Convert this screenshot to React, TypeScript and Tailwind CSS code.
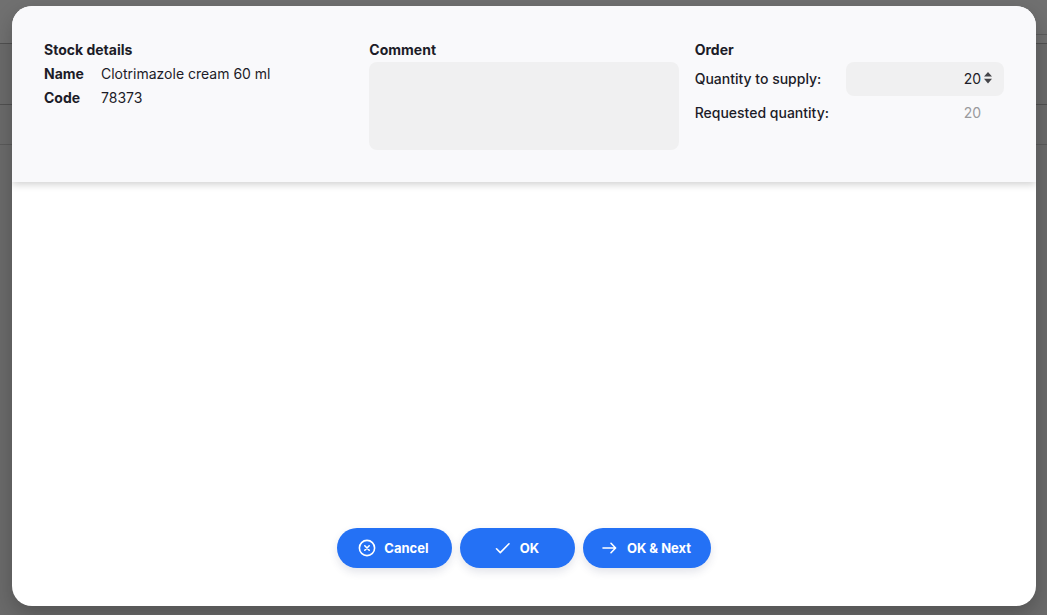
import { useState } from 'react';

const actionClass =
  'flex h-10 min-w-[115px] items-center justify-center gap-2 rounded-full bg-[#2471f5] pl-4 pr-5 text-[13px] font-bold leading-5 text-white shadow-[0_4px_8px_rgba(40,50,90,0.13)]';

function CancelIcon() {
  return (
    <svg viewBox="0 0 20 20" className="h-5 w-5" fill="none" stroke="currentColor" strokeWidth="1.6" strokeLinecap="round" aria-hidden="true">
      <circle cx="11" cy="10" r="7.6" />
      <path d="M8.8 7.8l4.4 4.4M13.2 7.8l-4.4 4.4" />
    </svg>
  );
}

function CheckIcon() {
  return (
    <svg viewBox="0 0 20 20" className="h-5 w-5" fill="none" stroke="currentColor" strokeWidth="1.6" strokeLinecap="round" strokeLinejoin="round" aria-hidden="true">
      <path d="M4.5 10.8l3.8 3.8L17 5.8" />
    </svg>
  );
}

function ArrowIcon() {
  return (
    <svg viewBox="0 0 20 20" className="h-5 w-5" fill="none" stroke="currentColor" strokeWidth="1.6" strokeLinecap="round" strokeLinejoin="round" aria-hidden="true">
      <path d="M4 10h12.4M12 5.3l4.6 4.7-4.6 4.7" />
    </svg>
  );
}

function StepperIcon() {
  return (
    <svg viewBox="0 0 8 12" className="pointer-events-none absolute right-3 top-[10px] h-3 w-2" fill="#454549" aria-hidden="true">
      <path d="M4 0L8 4.6H0zM4 11.4L0 6.8h8z" />
    </svg>
  );
}

function Backdrop() {
  return (
    <div className="absolute inset-0 -z-10 flex flex-col bg-[#6a6a6a]" aria-hidden="true">
      <div className="flex h-11 flex-col justify-end border-b border-[#505050] bg-[#707070]">
        <div className="mb-2 ml-auto h-px w-10 bg-[#5c5c5c]" />
      </div>
      <div className="h-[61px] border-b border-[#505050]" />
      <div className="h-10 border-b border-[#5a5a5a]" />
    </div>
  );
}

export default function App() {
  const [quantity, setQuantity] = useState('20');
  const [comment, setComment] = useState('');

  return (
    <div className="relative isolate flex min-h-screen pt-[6px] pr-[11px] pb-[9px] pl-3 font-['Inter',sans-serif] text-sm leading-6 text-[#1c1c28]">
      <Backdrop />
      <div
        role="dialog"
        aria-label="Stock details"
        className="flex flex-1 flex-col overflow-hidden rounded-[20px] bg-white shadow-[0_8px_20px_rgba(0,0,0,0.22)]"
      >
        <header className="grid grid-cols-3 gap-4 bg-[#f9f9fb] p-8 shadow-[0_2px_8px_rgba(0,0,0,0.2)]">
          <section>
            <h2 className="font-bold">Stock details</h2>
            <dl className="grid grid-cols-[57px_1fr]">
              <dt className="font-bold">Name</dt>
              <dd>Clotrimazole cream 60 ml</dd>
              <dt className="font-bold">Code</dt>
              <dd>78373</dd>
            </dl>
          </section>

          <section>
            <label htmlFor="comment" className="block font-bold">
              Comment
            </label>
            <textarea
              id="comment"
              value={comment}
              onChange={(e) => setComment(e.target.value)}
              className="block h-[88px] w-full resize-none rounded-lg bg-[#f0f0f1] px-3 py-2 outline-none"
            />
          </section>

          <section>
            <h2 className="font-bold">Order</h2>
            <div className="flex h-[34px] items-center justify-between">
              <label htmlFor="supply" className="font-medium">
                Quantity to supply:
              </label>
              <div className="relative w-[158px]">
                <input
                  id="supply"
                  type="number"
                  value={quantity}
                  onChange={(e) => setQuantity(e.target.value)}
                  className="block h-[34px] w-full appearance-none rounded-lg bg-[#f0f0f1] pr-[23px] pb-0.5 pl-3 text-right outline-none [-moz-appearance:textfield] [&::-webkit-inner-spin-button]:appearance-none"
                />
                <StepperIcon />
              </div>
            </div>
            <div className="flex h-[34px] items-center justify-between">
              <label htmlFor="requested" className="font-medium">
                Requested quantity:
              </label>
              <input
                id="requested"
                disabled
                value="20"
                className="block h-[34px] w-[158px] bg-transparent pr-[23px] pb-0.5 pl-3 text-right text-[#9a9a9d]"
              />
            </div>
          </section>
        </header>

        <main className="flex-1" />

        <footer className="flex justify-center gap-2 pb-[38px]">
          <button type="button" className={actionClass}>
            <CancelIcon />
            Cancel
          </button>
          <button type="button" className={actionClass}>
            <CheckIcon />
            OK
          </button>
          <button type="button" className={actionClass}>
            <ArrowIcon />
            OK &amp; Next
          </button>
        </footer>
      </div>
    </div>
  );
}
